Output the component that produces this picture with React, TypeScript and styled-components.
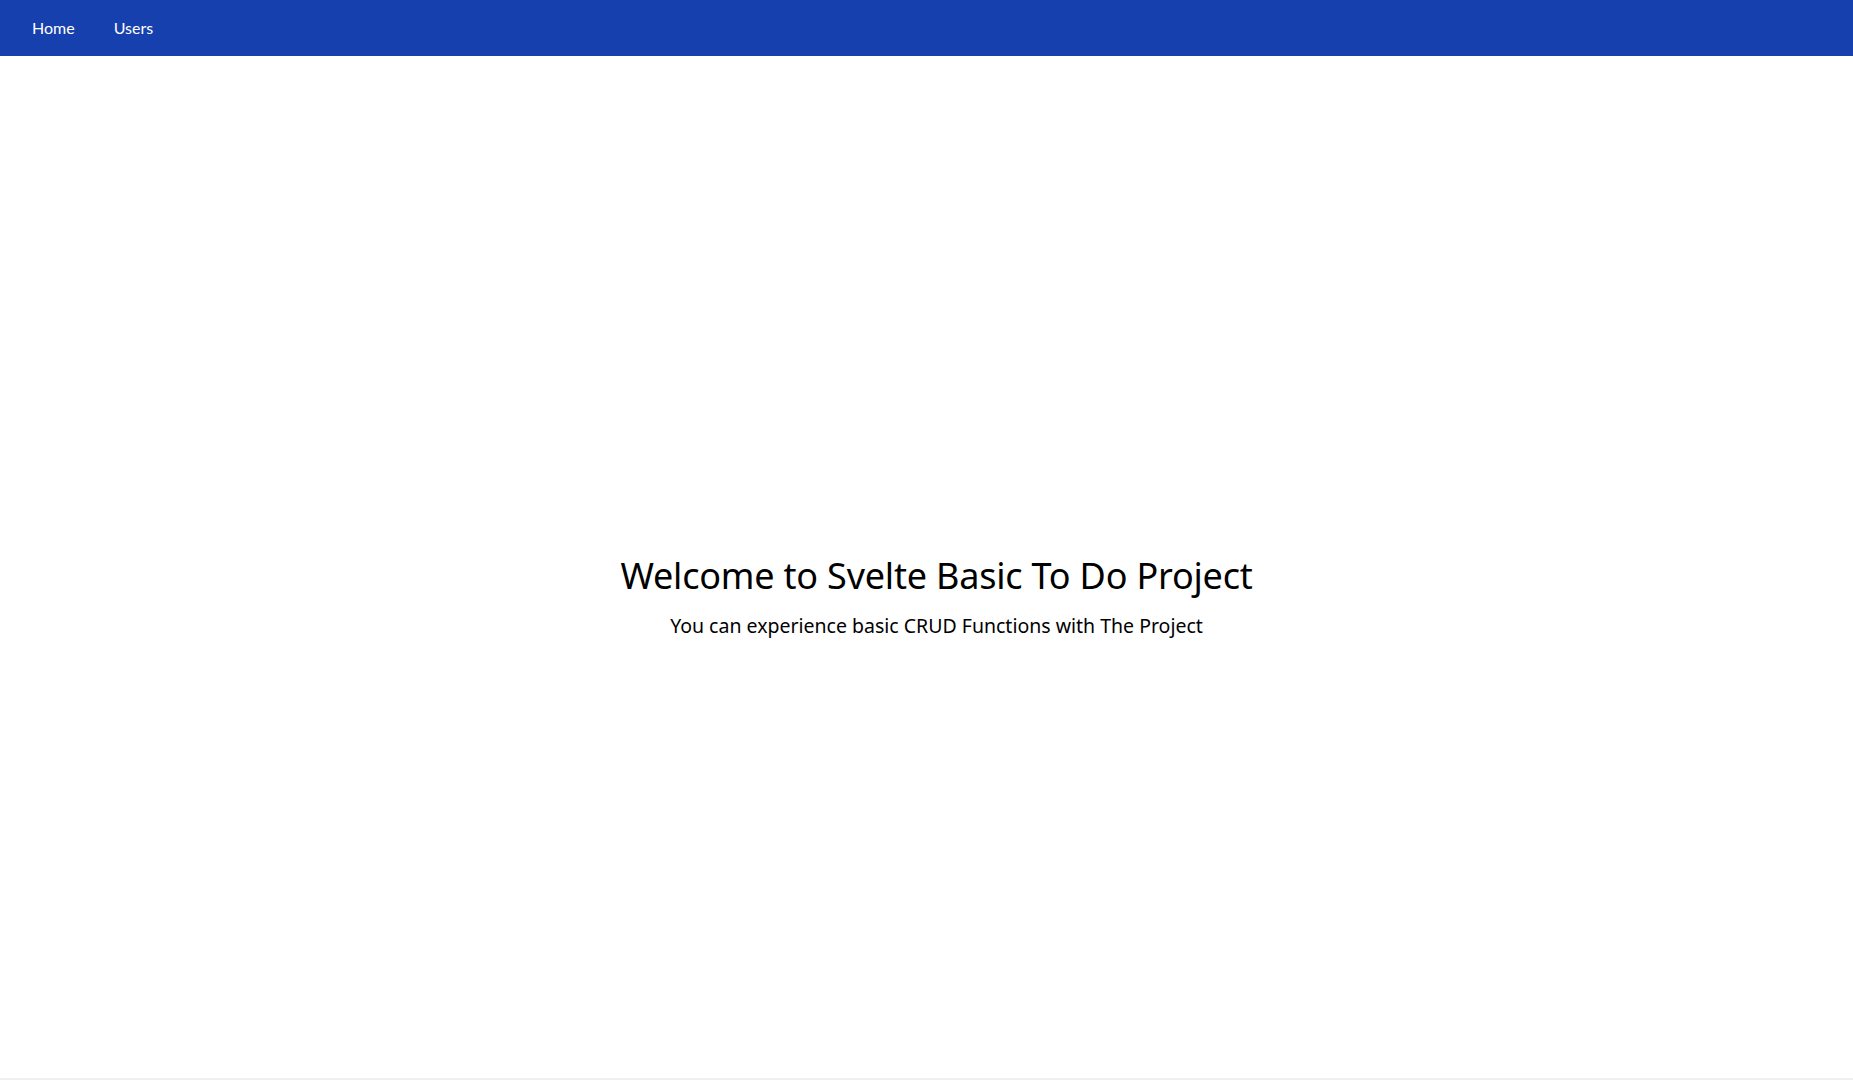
import React from "react";
import styled, { createGlobalStyle } from "styled-components";

const Global = createGlobalStyle`
  html, body { margin: 0; padding: 0; background: #ffffff; }
  body { font-family: "Noto Sans", "Open Sans", sans-serif; color: #000; }
  * { box-sizing: border-box; }
`;

const Page = styled.div`
  display: flex;
  flex-direction: column;
  height: 100vh;
  border-bottom: 2px solid #f0f0f0;
`;

const NavBar = styled.nav`
  height: 56px;
  flex: 0 0 auto;
  background: #1740af;
  display: flex;
  align-items: center;
  padding: 0 32px 2px;
  gap: 39px;
`;

const NavLink = styled.a`
  font-family: "Lato", sans-serif;
  font-size: 16px;
  color: #ffffff;
  text-decoration: none;
  cursor: pointer;
`;

const Main = styled.main`
  flex: 1 1 auto;
  display: flex;
  flex-direction: column;
  align-items: center;
  justify-content: center;
  padding-top: 55px;
  padding-left: 20px;
`;

const Title = styled.h1`
  margin: 0;
  font-family: "Noto Sans", sans-serif;
  font-weight: 400;
  font-size: 36px;
  line-height: 1.5;
  letter-spacing: -0.2px;
`;

const Subtitle = styled.p`
  margin: 8px 0 0;
  font-family: "Noto Sans", sans-serif;
  font-size: 19.5px;
  line-height: 1.5;
`;

export default function App() {
  return (
    <>
      <Global />
      <Page>
        <NavBar>
          <NavLink>Home</NavLink>
          <NavLink>Users</NavLink>
        </NavBar>
        <Main>
          <Title>Welcome to Svelte Basic To Do Project</Title>
          <Subtitle>You can experience basic CRUD Functions with The Project</Subtitle>
        </Main>
      </Page>
    </>
  );
}
